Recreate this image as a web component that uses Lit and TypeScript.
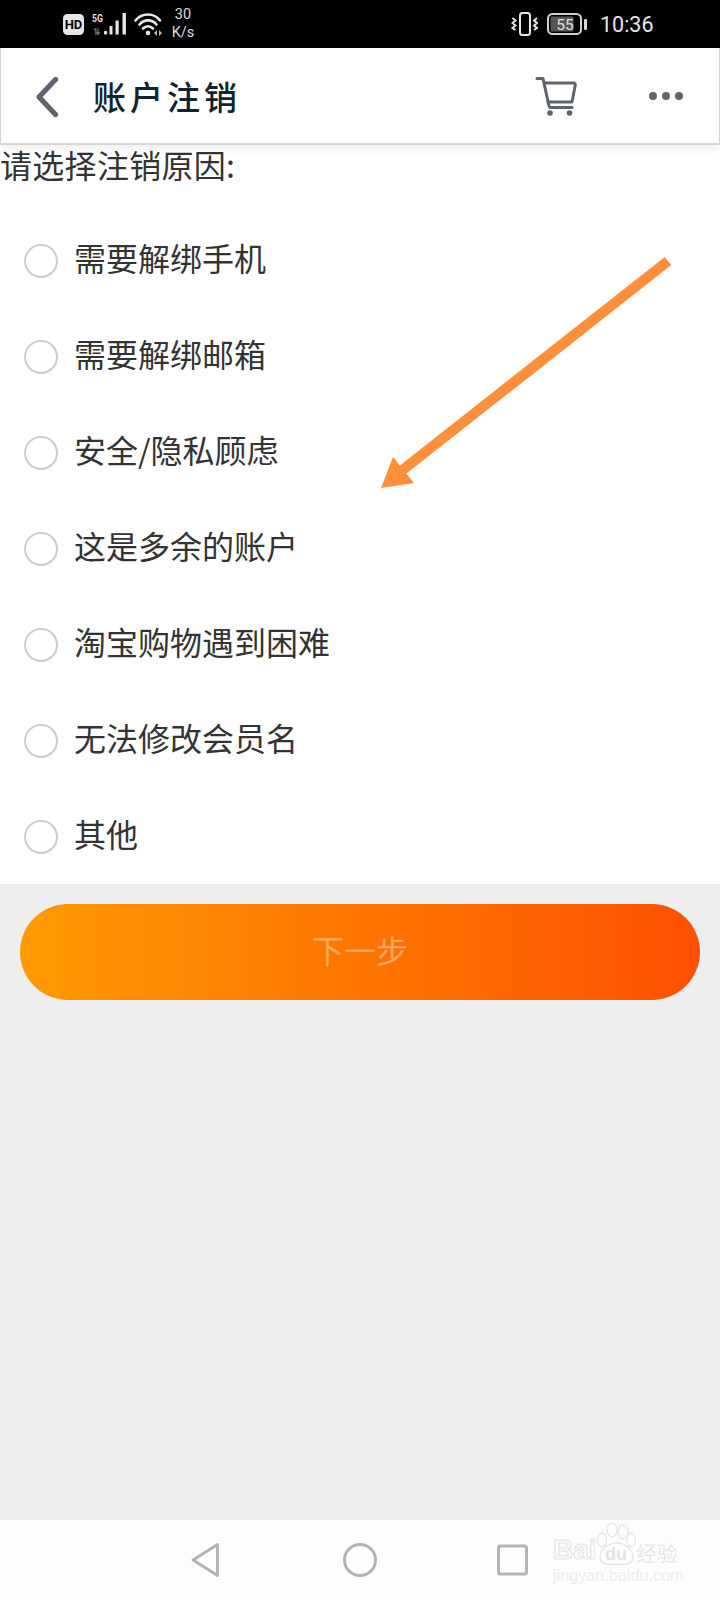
import { LitElement, html, css } from "lit";
import { customElement } from "lit/decorators.js";

const OPTIONS = ["需要解绑手机", "需要解绑邮箱", "安全/隐私顾虑", "这是多余的账户", "淘宝购物遇到困难", "无法修改会员名", "其他"];

@customElement("app-root")
export class AppRoot extends LitElement {
  static styles = css`
    :host { display: block; width: 720px; height: 1600px; overflow: hidden; position: relative; background: #eeeeee;
      font-family: "Noto Sans CJK SC", "Noto Sans", sans-serif; color: #333; }
    .page { display: flex; flex-direction: column; height: 1600px; }
    .status { height: 48px; flex: none; background: #000; color: #e6e6e6; display: flex; align-items: center; padding: 0 65px 0 63px; font-family: Roboto, sans-serif; }
    .status svg { display: block; flex: none; }
    .sig { margin-left: 8px; }
    .wifi { margin-left: 6px; }
    .bat { margin-left: 9px; }
    .speed { margin-left: 7px; width: 26px; font-size: 14.5px; line-height: 18px; text-align: center; color: #ddd; }
    .spacer { flex: 1; }
    .time { font-size: 21.5px; margin-left: 12px; width: 55px; }
    .header { height: 97px; flex: none; box-sizing: border-box; background: #fff; display: flex; align-items: center; padding-left: 34px;
      border: 1px solid #d4d4d4; border-width: 0 1px 2px 1px; box-shadow: 0 3px 10px rgba(0,0,0,.07); position: relative; }
    .back { margin-top: 2px; }
    .title { margin-left: 34px; font-size: 33px; letter-spacing: 4px; color: #10242f; font-weight: 500; line-height: 96px; }
    .cart { margin-left: auto; }
    .more { margin: 0 36px 0 72px; }
    .body { background: #fff; height: 739px; flex: none; }
    .prompt { font-size: 32px; line-height: 38px; height: 47px; letter-spacing: 0.3px; color: #333; }
    .opts { display: flex; flex-direction: column; margin-top: 21px; }
    .row { height: 96px; display: flex; align-items: center; padding-left: 24px; font-size: 32px; color: #333; }
    .row span:last-child { padding-bottom: 8px; }
    .radio { width: 34px; height: 34px; box-sizing: border-box; border: 2px solid #cccccc; border-radius: 50%; margin-right: 16px; flex: none; }
    .btn-wrap { padding: 20px 20px 0; }
    .btn { height: 96px; box-sizing: border-box; padding-bottom: 6px; border-radius: 48px; background: linear-gradient(90deg, #ff9a00, #ff5000); display: flex; align-items: center; justify-content: center;
      font-size: 32px; color: rgba(255,255,255,.4); }
    .grow { flex: 1; }
    .nav { height: 80px; flex: none; background: #fdfdfd; position: relative; display: flex; align-items: center; }
    .nav svg.keys { display: block; }
    .mark { position: absolute; left: 553px; top: 2px; width: 130px; height: 64px; font-family: "Liberation Sans", sans-serif; }
    .mark span { position: absolute; white-space: nowrap; }
    .mark svg { position: absolute; left: 40px; top: 0; }
    .bai { left: 0; top: 13px; font-size: 28px; line-height: 30px; font-weight: 700; -webkit-text-stroke: 1px #e4e4e4; color: #fbfbfb; }
    .du { left: 52px; top: 21px; font-size: 18px; line-height: 22px; font-weight: 700; color: #e4e4e4; }
    .jing { left: 0; top: 44px; font-size: 16.2px; line-height: 18px; color: #ededed; }
    .cn { left: 83px; top: 16px; font-size: 21px; line-height: 28px; color: #e8e8e8; font-family: "Noto Sans CJK SC", sans-serif; }
    .arrow { position: absolute; left: 0; top: 0; pointer-events: none; }
  `;

  render() {
    return html`
      <div class="page">
        <div class="status">
          <svg width="21" height="21" viewBox="0 0 21 21"><rect width="21" height="21" rx="4.5" fill="#e6e6e6"/><text x="10.5" y="15.200" text-anchor="middle" font-size="13" font-weight="700" font-family="Roboto, sans-serif" fill="#000">HD</text></svg>
          <svg class="sig" width="35" height="24" viewBox="0 0 35 24">
            <text x="0" y="10" font-size="11" font-weight="700" font-family="Roboto, sans-serif" fill="#ddd" textLength="11" lengthAdjust="spacingAndGlyphs">5G</text>
            <text x="1" y="22.500" font-size="8.500" font-weight="700" font-family="Roboto, sans-serif" fill="#777">1</text>
            <path d="M6 16.500v6M4.200 20l1.800 2.500L7.800 20" fill="none" stroke="#777" stroke-width="1.200"/>
            <rect x="12" y="19" width="3.200" height="3.500" rx="1" fill="#e6e6e6"/><rect x="17.500" y="14" width="3" height="8.500" fill="#e6e6e6"/><rect x="23.500" y="8.500" width="3.200" height="14" fill="#e6e6e6"/><rect x="30.500" y="1" width="3.400" height="21.500" fill="#e6e6e6"/>
          </svg>
          <svg class="wifi" width="30" height="24" viewBox="0 0 30 24" fill="none" stroke="#e6e6e6" stroke-width="2.600" stroke-linecap="round">
            <path d="M2.500 8.500C9 .5 21 .5 27 8.500"/><path d="M6.500 12.500C11 7 19 7 23.500 12.500"/><path d="M10 16.500C13 13.500 17 13.500 20 16.500"/>
            <circle cx="15" cy="21" r="2.300" fill="#e6e6e6" stroke="none"/><path d="M24 18v6l-3-3zM26 18l3 3-3 3z" fill="#bbb" stroke="none"/>
          </svg>
          <div class="speed">30<br />K/s</div>
          <div class="spacer"></div>
          <svg width="27" height="24" viewBox="0 0 27 24" fill="none" stroke="#e6e6e6">
            <rect x="9" y="1" width="10" height="22" rx="2.500" stroke-width="2"/>
            <path d="M1.500 6l3 2.500-3 2.500 3 2.500-3 2.500 3 2M26 6l-3 2.500 3 2.500-3 2.500 3 2.500-3 2" stroke-width="1.900"/>
          </svg>
          <svg class="bat" width="41" height="22" viewBox="0 0 41 22">
            <rect x="1" y="1" width="33" height="20" rx="4.500" fill="none" stroke="#cfcfcf" stroke-width="2"/>
            <rect x="3.500" y="3.500" width="23" height="15" rx="1.500" fill="#555"/>
            <rect x="37" y="6" width="3" height="11" rx="1.200" fill="#d8d8d8"/>
            <text x="18" y="16.500" text-anchor="middle" font-size="15.500" font-family="Roboto, sans-serif" fill="#e0e0e0">55</text>
          </svg>
          <div class="time">10:36</div>
        </div>
        <div class="header">
          <svg class="back" width="24" height="42" viewBox="0 0 24 42" fill="none" stroke="#5f636e" stroke-width="5.200" stroke-linecap="round" stroke-linejoin="round"><path d="M20.500 3.500L4 21l16.500 17.500"/></svg>
          <div class="title">账户注销</div>
          <svg class="cart" width="42" height="42" viewBox="0 0 42 42" fill="none" stroke="#5f636e" stroke-width="3" stroke-linecap="round" stroke-linejoin="round">
            <path d="M2 3.500H8L14 31"/><path d="M9.500 8H38.500C40 8 40.500 9 40.200 10.500L37 27H13"/><path d="M15 32.500H37"/>
            <circle cx="15" cy="38" r="2.800" fill="#5f636e" stroke="none"/><circle cx="34.500" cy="38" r="2.800" fill="#5f636e" stroke="none"/>
          </svg>
          <svg class="more" width="34" height="10" viewBox="0 0 34 10" fill="#5f636e"><circle cx="4" cy="5" r="4"/><circle cx="17" cy="5" r="4"/><circle cx="30" cy="5" r="4"/></svg>
        </div>
        <div class="body">
          <div class="prompt">请选择注销原因:</div>
          <div class="opts">
            ${OPTIONS.map((o) => html`<div class="row"><span class="radio"></span><span>${o}</span></div>`)}
          </div>
        </div>
        <div class="btn-wrap"><div class="btn">下一步</div></div>
        <div class="grow"></div>
        <div class="nav">
          <svg class="keys" width="540" height="80" viewBox="0 0 540 80" fill="none" stroke="#b3b3b3" stroke-width="3" stroke-linejoin="round">
            <path d="M217.500 24.500L193 40l24.500 15.500z"/>
            <circle cx="360" cy="40" r="15.500"/>
            <rect x="498.500" y="26" width="28" height="28" rx="2"/>
          </svg>
          <div class="mark">
            <svg width="50" height="46" viewBox="0 0 50 46" fill="#fdfdfd" stroke="#e6e6e6" stroke-width="1.300">
              <ellipse cx="9" cy="18" rx="4.500" ry="7"/><ellipse cx="19" cy="8" rx="5" ry="7"/><ellipse cx="30" cy="10" rx="5" ry="7"/><ellipse cx="38" cy="18" rx="4.500" ry="7"/>
              <path d="M23.500 21C15 21 7 28 7 35c0 8 10 8 16.500 7 7 1 16.500 1 16.500-7 0-7-8-14-16.500-14z"/>
            </svg>
            <span class="bai">Bai</span><span class="du">du</span><span class="cn">经验</span>
            <span class="jing">jingyan.baidu.com</span>
          </div>
        </div>
      </div>
      <svg class="arrow" width="720" height="1600" viewBox="0 0 720 1600" fill="#ff8f3a">
        <path d="M668 261L400 472" stroke="#ff8f3a" stroke-width="10.500" fill="none"/>
        <path d="M381 488L393 457L414 483z"/>
      </svg>
    `;
  }
}
